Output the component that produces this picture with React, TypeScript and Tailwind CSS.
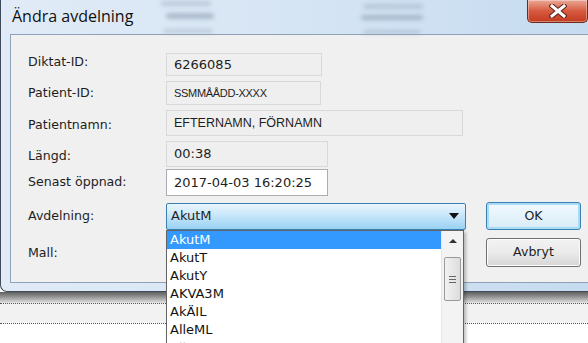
const items = ["AkutM", "AkutT", "AkutY", "AKVA3M", "AkÄIL", "AlleML", "AllmM"];

function ReadField({ w, h, children, className = "" }: { w: string; h: string; children: React.ReactNode; className?: string }) {
  return (
    <div className={`${w} ${h} flex items-center border border-[#d9d9d9] bg-[#efefef] pl-[7px] ${className}`}>{children}</div>
  );
}

export default function App() {
  return (
    <div className="relative h-[343px] w-[588px] overflow-hidden bg-white font-['DejaVu_Sans',sans-serif] text-[12.6px] text-[#1e1e1e]">
      {/* dialog window */}
      <div className="flex h-[292px] flex-col rounded-bl-[7px] border-b border-l border-[#3f4b58] bg-gradient-to-r from-[#e1ebf7] via-[#d6e5f4] to-[#c6dbf0]">
        <div className="relative flex h-[34px] items-start justify-between pl-[11px]">
          <div className="absolute left-[160px] top-[1px] h-[5px] w-[50px] rounded bg-[#8ea0b4]/40 blur-[2px]" />
          <div className="absolute left-[165px] top-[13px] h-[6px] w-[48px] rounded bg-[#7d8fa3]/50 blur-[2px]" />
          <div className="absolute left-[162px] top-[29px] h-[4px] w-[50px] rounded bg-[#8ea0b4]/40 blur-[2px]" />
          <div className="absolute left-[362px] top-[4px] h-[5px] w-[60px] rounded bg-[#8ea0b4]/40 blur-[2px]" />
          <div className="absolute left-[360px] top-[15px] h-[5px] w-[62px] rounded bg-[#7d8fa3]/50 blur-[2px]" />
          <div className="absolute left-[362px] top-[30px] h-[4px] w-[58px] rounded bg-[#8ea0b4]/40 blur-[2px]" />
          <span className="relative mt-[6px] font-['Open_Sans',sans-serif] text-[16px] leading-[21px] text-[#111]">Ändra avdelning</span>
          <div className="relative flex h-[23px] w-[61px] items-center justify-center rounded-b-[5px] border border-t-0 border-[#6f2a1c] bg-gradient-to-b from-[#e9a896] via-[#d65a3f] to-[#c23a1f] shadow-[inset_0_0_0_1px_rgba(255,255,255,0.35)]">
            <svg width="18" height="14" viewBox="0 0 18 14">
              <path d="M3 2 L15 12 M15 2 L3 12" stroke="#5a1f14" strokeWidth="5" strokeLinecap="square" />
              <path d="M3 2 L15 12 M15 2 L3 12" stroke="#ffffff" strokeWidth="3" strokeLinecap="square" />
            </svg>
          </div>
        </div>
        <div className="flex-1 pb-[8px] pl-[9px]">
          <div className="h-full border border-r-0 border-[#8ea1b6] bg-[#f0f0f0] pl-[17px] pt-[18px]">
            <div className="flex h-[23px] items-center">
              <span className="w-[138px] -translate-y-[2px]">Diktat-ID:</span>
              <ReadField w="w-[156px]" h="h-[23px]" className="text-[13px]">6266085</ReadField>
            </div>
            <div className="mt-[5px] flex h-[24px] items-center">
              <span className="w-[138px]">Patient-ID:</span>
              <ReadField w="w-[155px]" h="h-[24px]" className="font-['Liberation_Sans',sans-serif] text-[11px] tracking-[-0.3px]">SSMMÅÅDD-XXXX</ReadField>
            </div>
            <div className="mt-[5px] flex h-[26px] items-center">
              <span className="w-[138px] translate-y-[2px]">Patientnamn:</span>
              <ReadField w="w-[297px]" h="h-[26px]" className="font-['Liberation_Sans',sans-serif] text-[12.5px]">EFTERNAMN, FÖRNAMN</ReadField>
            </div>
            <div className="mt-[5px] flex h-[26px] items-center">
              <span className="w-[138px] translate-y-[2px]">Längd:</span>
              <ReadField w="w-[162px]" h="h-[26px]" className="text-[13px]">00:38</ReadField>
            </div>
            <div className="mt-[2px] flex h-[27px] items-center">
              <span className="w-[138px]">Senast öppnad:</span>
              <div className="flex h-[27px] w-[162px] items-center border border-[#abadb3] bg-white pl-[7px] text-[13px]">2017-04-03 16:20:25</div>
            </div>
            <div className="mt-[6px] flex h-[28px] items-center">
              <span className="w-[138px]">Avdelning:</span>
              <div className="flex h-[27px] w-[300px] items-center justify-between rounded-[2px] border border-[#3c7fb1] bg-gradient-to-b from-[#eaf6fd] via-[#c4e5f9] to-[#98d1f3] pl-[4px] pr-[6px] text-[13px]">
                <span>AkutM</span>
                <svg width="10" height="6" viewBox="0 0 10 6"><path d="M0 0 H10 L5 6 Z" fill="#111" /></svg>
              </div>
              <div className="ml-[20px] flex h-[28px] w-[95px] items-center justify-center rounded-[3px] border border-[#3c7fb1] bg-gradient-to-b from-[#f2f9fd] to-[#d7ecf8] shadow-[inset_0_0_0_2px_#a6dcf5]">OK</div>
            </div>
            <div className="mt-[8px] flex h-[29px] items-center">
              <span className="w-[138px] translate-y-[1px]">Mall:</span>
              <div className="w-[300px]" />
              <div className="ml-[20px] flex h-[29px] w-[95px] items-center justify-center rounded-[3px] border border-[#707070] bg-gradient-to-b from-[#f2f2f2] via-[#ebebeb] to-[#d6d6d6] shadow-[inset_0_0_0_1px_#fcfcfc]">Avbryt</div>
            </div>
          </div>
        </div>
      </div>
      {/* background below the dialog */}
      <div className="h-[11px] bg-gradient-to-b from-[#5f5f5f] via-[#9a9a9a] to-[#e4e4e4]" />
      <div className="h-[20px] border-t border-dotted border-[#555] bg-[#f2f2f2]" />
      <div className="border-t border-dotted border-[#555]" />

      {/* open dropdown list */}
      <div className="absolute left-[166px] top-[230px] flex h-[120px] w-[298px] border border-[#646464] bg-white text-[13px] shadow-[2px_2px_3px_rgba(0,0,0,0.25)]">
        <div className="flex-1">
          {items.map((it, i) => (
            <div
              key={it}
              className={`flex h-[18px] items-center pl-[3px] ${i === 0 ? "bg-[#3399ff] text-white" : i === 6 ? "text-[#d0d0d0]" : "text-[#111]"}`}
            >
              {it}
            </div>
          ))}
        </div>
        <div className="flex w-[22px] flex-col items-center border-l border-[#e6e6e6] bg-[#f3f3f3] pt-[8px]">
          <svg width="8" height="4" viewBox="0 0 8 4"><path d="M0 4 L4 0 L8 4 Z" fill="#333" /></svg>
          <div className="mt-[14px] flex h-[44px] w-[17px] flex-col items-center justify-center gap-[2px] rounded-[2px] border border-[#9a9a9a] bg-gradient-to-r from-[#f2f2f2] to-[#dcdcdc]">
            <div className="h-px w-[7px] bg-[#666]" />
            <div className="h-px w-[7px] bg-[#666]" />
            <div className="h-px w-[7px] bg-[#666]" />
          </div>
        </div>
      </div>
    </div>
  );
}
